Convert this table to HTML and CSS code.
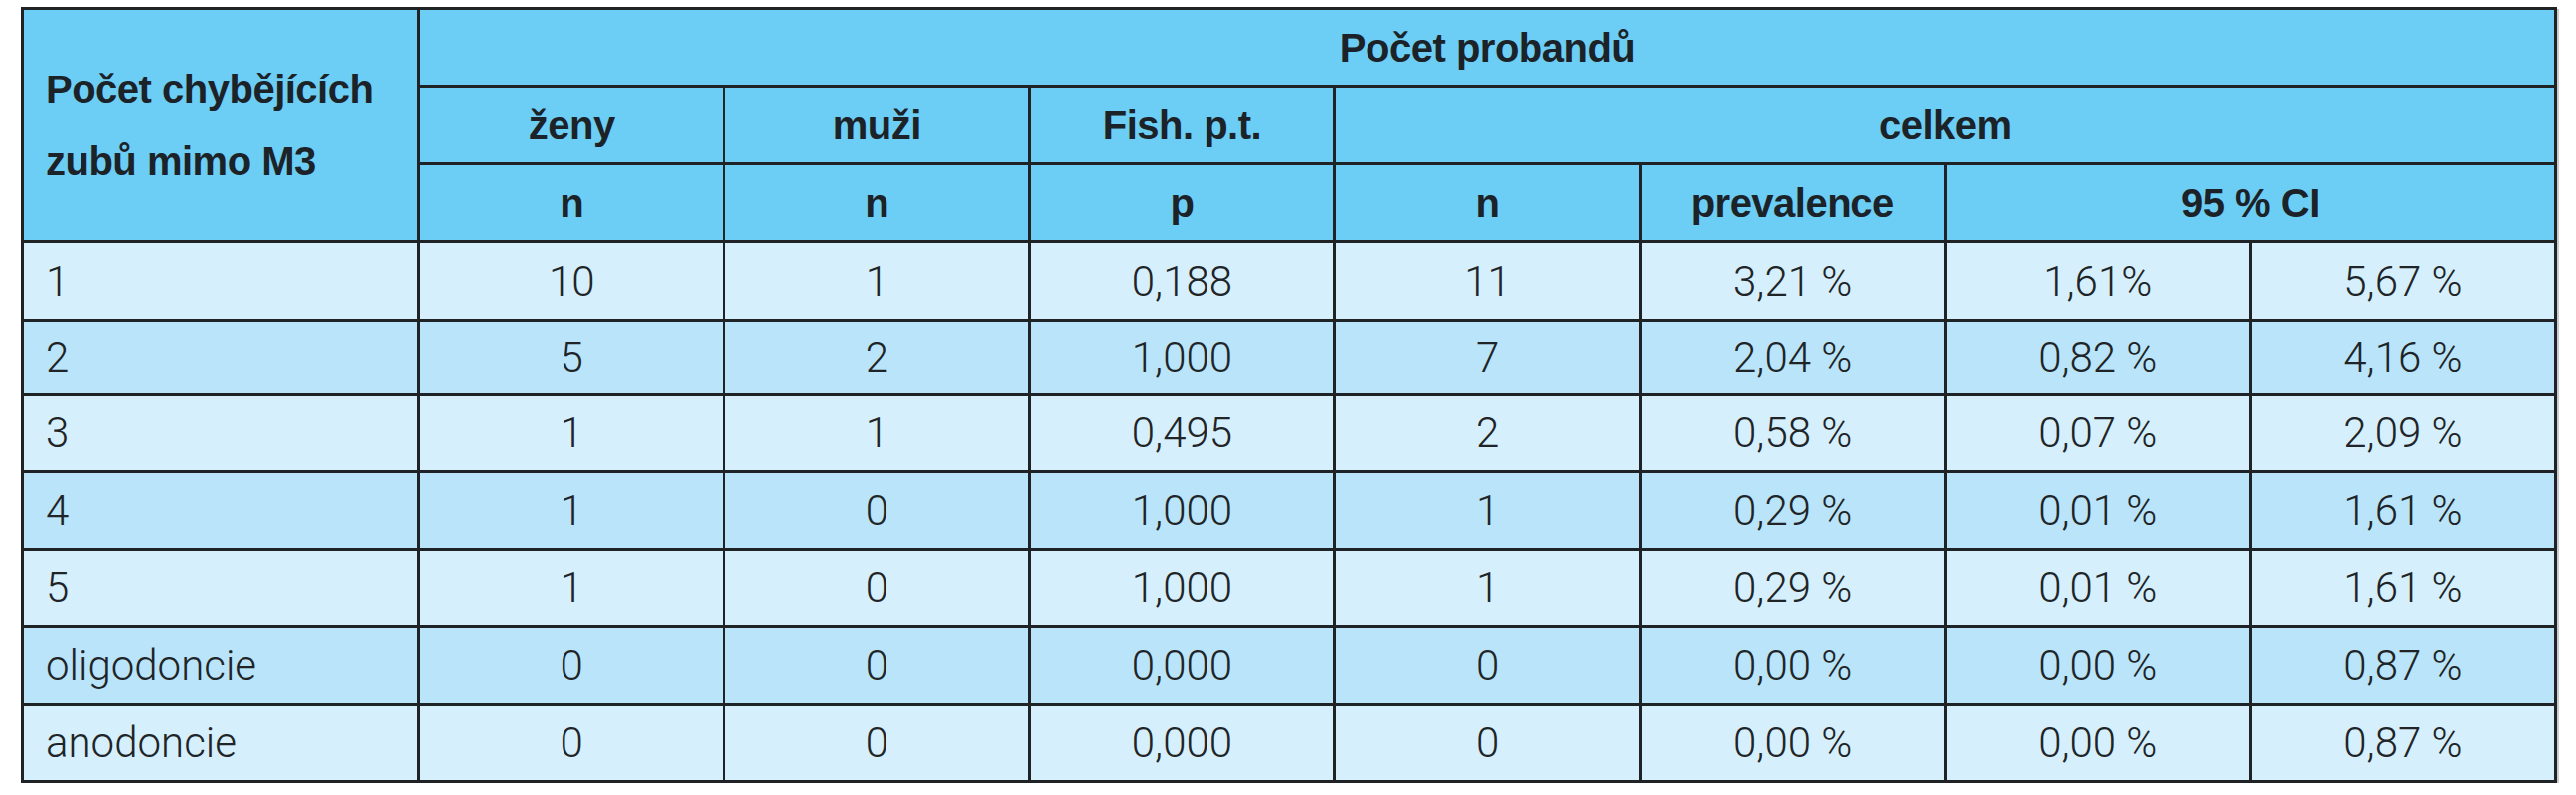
FILE: index.html
```html
<!DOCTYPE html>
<html lang="cs">
<head>
<meta charset="utf-8">
<title>Počet probandů</title>
<link rel="stylesheet" href="styles.css">
</head>
<body>
<table class="data">
  <colgroup>
    <col class="c-first">
    <col class="c-std"><col class="c-std"><col class="c-std">
    <col class="c-std"><col class="c-std"><col class="c-std"><col class="c-std">
  </colgroup>
  <thead>
    <tr class="h1">
      <th rowspan="3" class="lead">Počet chybějících<br>zubů mimo M3</th>
      <th colspan="7">Počet probandů</th>
    </tr>
    <tr class="h2">
      <th>ženy</th>
      <th>muži</th>
      <th>Fish. p.t.</th>
      <th colspan="4">celkem</th>
    </tr>
    <tr class="h3">
      <th>n</th>
      <th>n</th>
      <th>p</th>
      <th>n</th>
      <th>prevalence</th>
      <th colspan="2">95 % CI</th>
    </tr>
  </thead>
  <tbody>
    <tr class="light r1"><td>1</td><td>10</td><td>1</td><td>0,188</td><td>11</td><td>3,21 %</td><td>1,61%</td><td>5,67 %</td></tr>
    <tr class="dark r2"><td>2</td><td>5</td><td>2</td><td>1,000</td><td>7</td><td>2,04 %</td><td>0,82 %</td><td>4,16 %</td></tr>
    <tr class="light"><td>3</td><td>1</td><td>1</td><td>0,495</td><td>2</td><td>0,58 %</td><td>0,07 %</td><td>2,09 %</td></tr>
    <tr class="dark"><td>4</td><td>1</td><td>0</td><td>1,000</td><td>1</td><td>0,29 %</td><td>0,01 %</td><td>1,61 %</td></tr>
    <tr class="light"><td>5</td><td>1</td><td>0</td><td>1,000</td><td>1</td><td>0,29 %</td><td>0,01 %</td><td>1,61 %</td></tr>
    <tr class="dark"><td>oligodoncie</td><td>0</td><td>0</td><td>0,000</td><td>0</td><td>0,00 %</td><td>0,00 %</td><td>0,87 %</td></tr>
    <tr class="light"><td>anodoncie</td><td>0</td><td>0</td><td>0,000</td><td>0</td><td>0,00 %</td><td>0,00 %</td><td>0,87 %</td></tr>
  </tbody>
</table>
</body>
</html>
```
FILE: styles.css
```css
html, body {
  margin: 0;
  padding: 0;
  background: #ffffff;
}

body {
  padding: 7px 0 0 21px;
}

.data {
  border-collapse: collapse;
  table-layout: fixed;
  width: 2552px;
  font-family: "Liberation Sans", Arial, sans-serif;
  color: #222629;
  box-shadow: 2px 2px 0 #c9cdd0;
}

.c-first { width: 399px; }
.c-std { width: 307px; }

.data th,
.data td {
  border: 3px solid #1f2326;
  padding: 0;
  text-align: center;
  vertical-align: middle;
  white-space: nowrap;
}

.data th {
  background: #6ccdf5;
  font-weight: 700;
  font-size: 40px;
  letter-spacing: -0.5px;
  color: #1c2328;
}

.data th.lead {
  text-align: left;
  padding-left: 22px;
  line-height: 72px;
}

.data td {
  font-family: Roboto, "Liberation Sans", sans-serif;
  font-weight: 300;
  font-size: 42px;
  color: #202427;
}

.data td:first-child {
  text-align: left;
  padding-left: 22px;
}

.h1 { height: 79px; }
.h2 { height: 77px; }
.h3 { height: 79px; }

.data tbody tr { height: 78px; }
.data tbody tr.r1 { height: 79px; }
.data tbody tr.r2 { height: 74px; }

.light td { background: #d5effc; }
.dark td { background: #b9e4f9; }
```
